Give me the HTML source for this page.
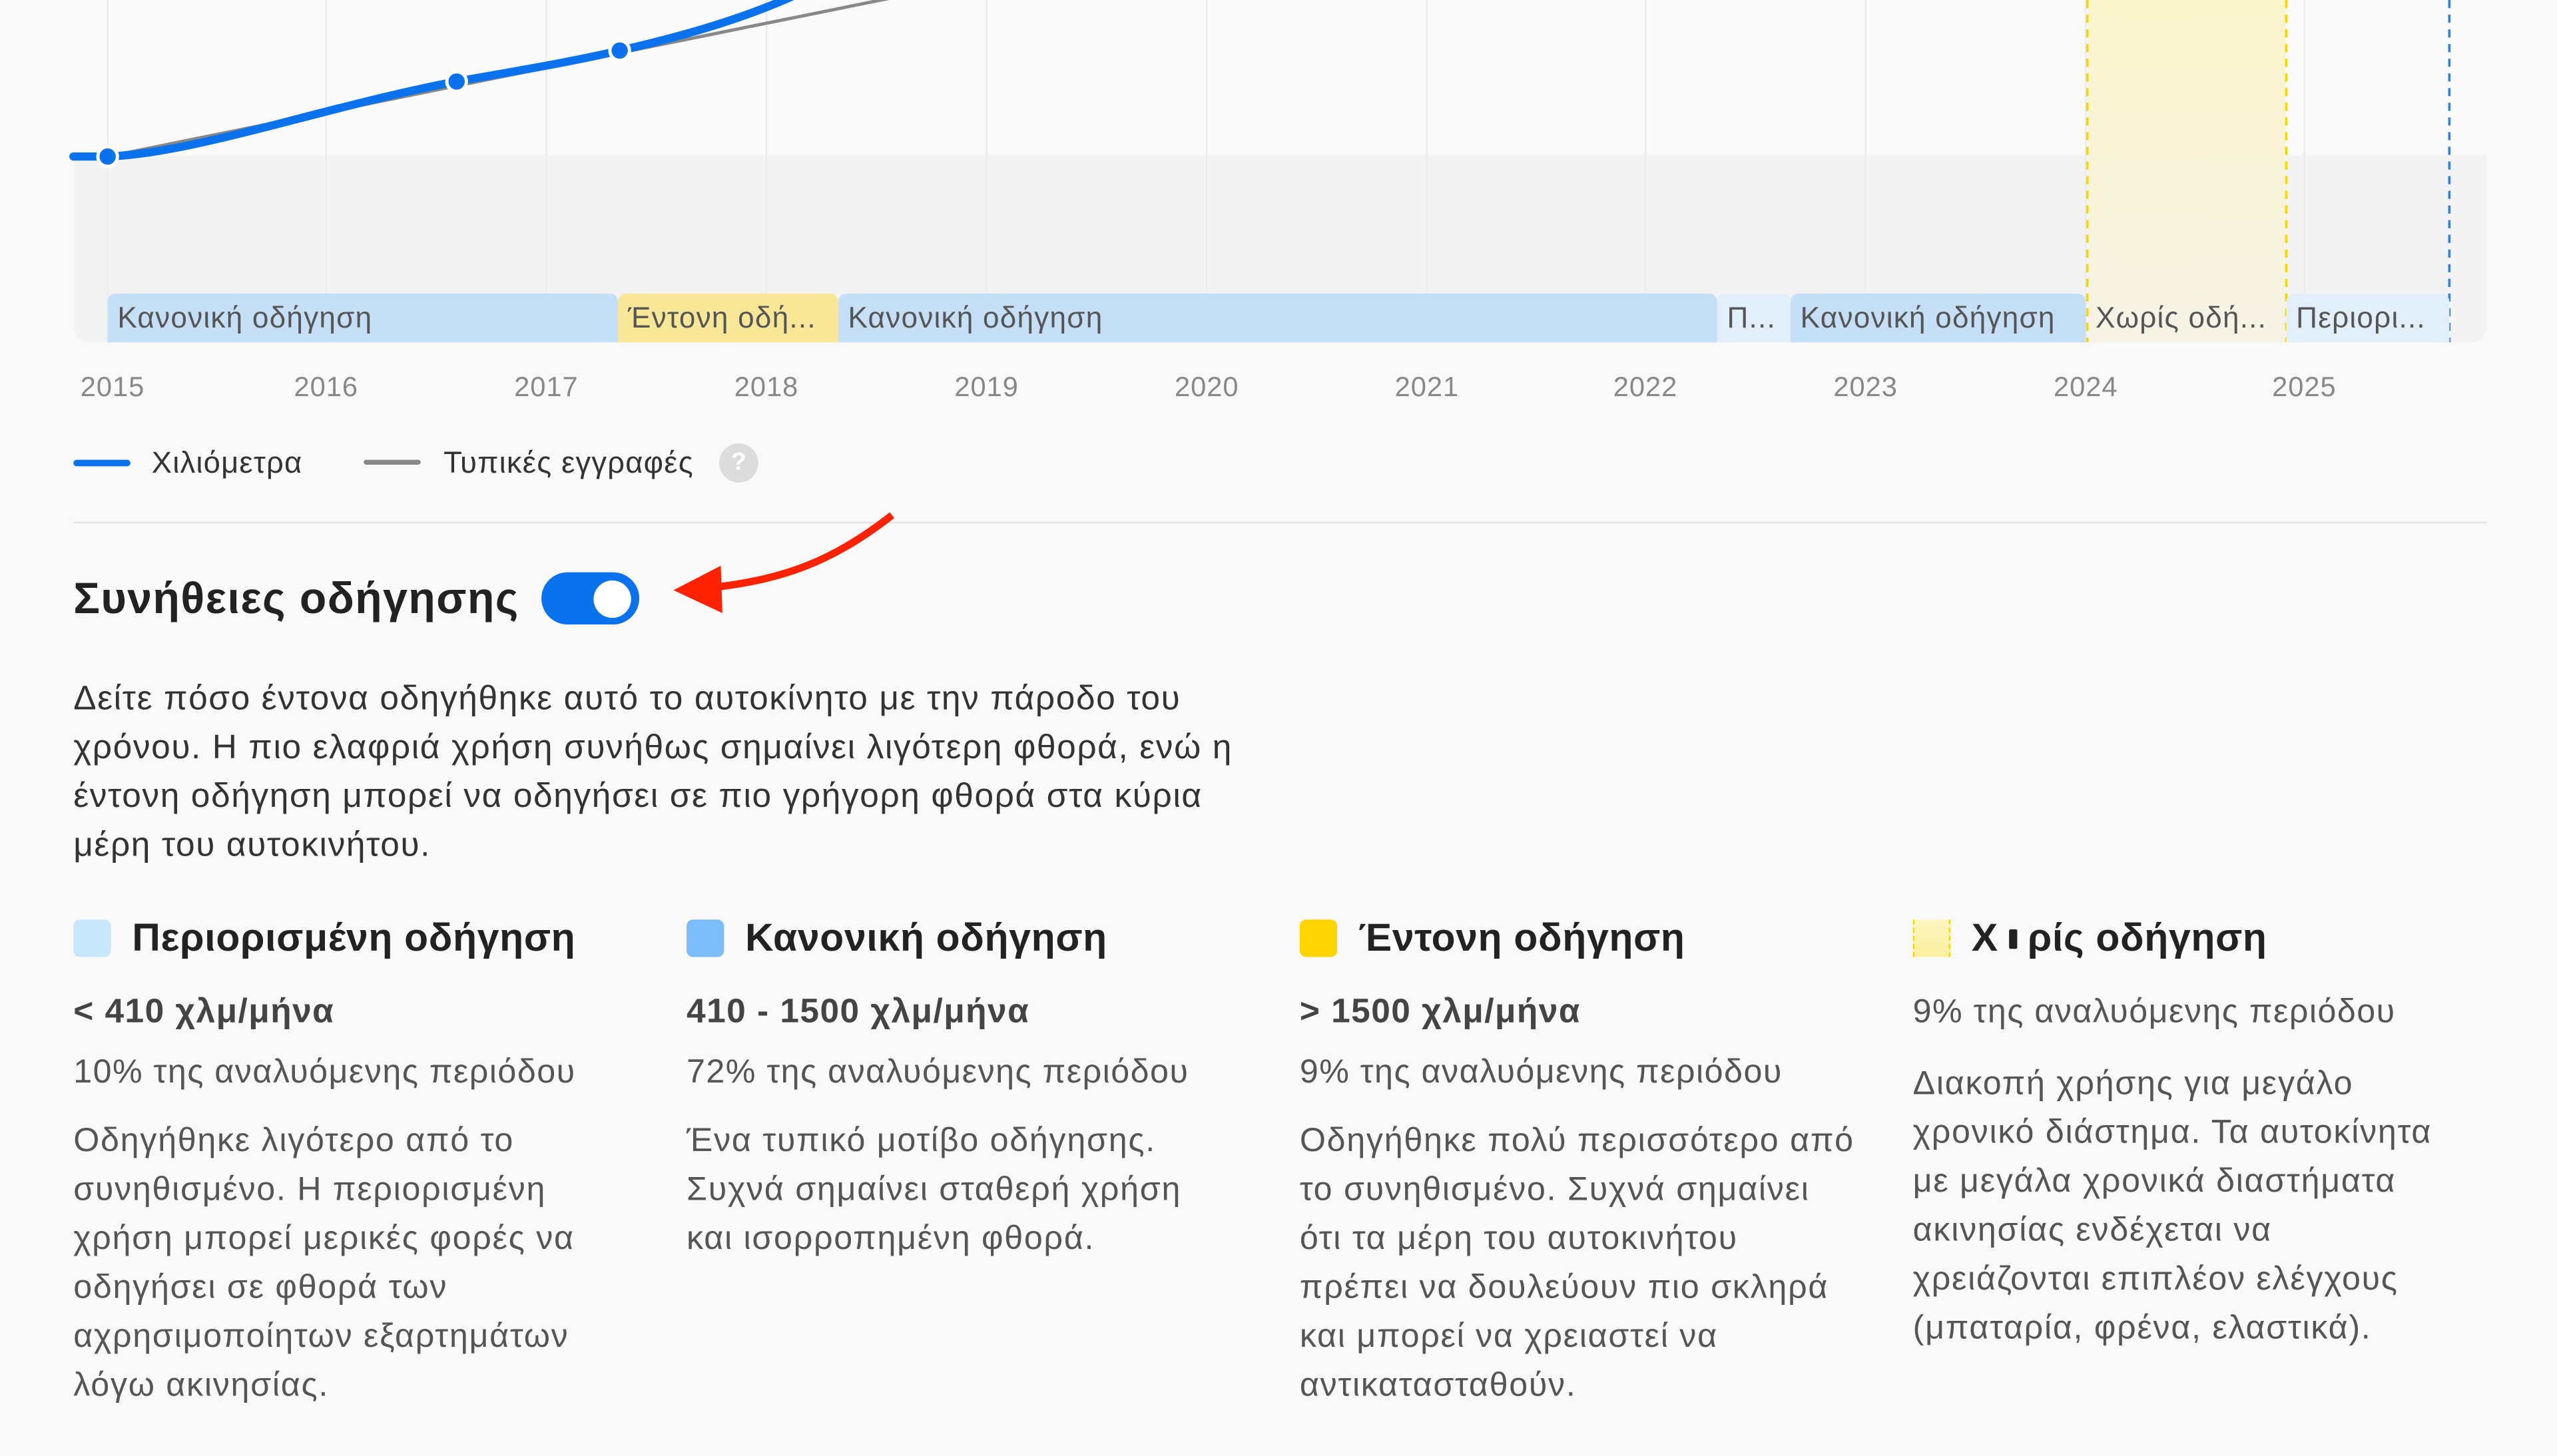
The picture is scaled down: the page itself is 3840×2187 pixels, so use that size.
<!DOCTYPE html>
<html><head><meta charset="utf-8"><style>
html,body{margin:0;padding:0;background:#f9f9f9;overflow:hidden}
body{width:3840px;height:2187px}
#w{position:absolute;left:0;top:0;width:1568px;height:893px;transform:scale(2.44898);transform-origin:0 0;font-family:"Liberation Sans",sans-serif;color:#333}
.a{position:absolute;white-space:nowrap}
.band{position:absolute;top:180px;height:30px;line-height:30px;font-size:18px;letter-spacing:.5px;color:#555;padding-left:6px;box-sizing:border-box;overflow:hidden;border-radius:5px 5px 0 0;white-space:nowrap}
.yr{position:absolute;top:228px;font-size:17px;letter-spacing:.4px;color:#888;width:60px;text-align:center}
.col{position:absolute;top:560px;width:370px}
.t{font-size:24px;letter-spacing:.3px;font-weight:bold;color:#222;height:32px;line-height:32px;position:relative;padding-left:36px;white-space:nowrap}
.sq{position:absolute;left:0;top:4px;width:23px;height:23px;border-radius:4px}
.s{font-size:21px;letter-spacing:.6px;font-weight:bold;color:#444;margin-top:15px;line-height:28px}
.g{font-size:20.5px;color:#555;margin-top:9px;line-height:28px;letter-spacing:.6px;white-space:nowrap}
.d{font-size:20.5px;color:#555;margin-top:13px;line-height:30px;letter-spacing:.7px;white-space:nowrap}
</style></head><body><div id="w">
<svg class="a" style="left:0;top:0" width="1568" height="215">
<defs><clipPath id="c"><path d="M45 0H1525V198Q1525 210 1513 210H57Q45 210 45 198Z"/></clipPath>
<linearGradient id="yg" x1="0" y1="0" x2="0" y2="1"><stop offset="0" stop-color="#fbf5cc"/><stop offset="1" stop-color="#f6f3e6"/></linearGradient></defs>
<g clip-path="url(#c)">
<rect x="45" y="0" width="1480" height="210" fill="#fafafa"/>
<rect x="45" y="95" width="1480" height="115" fill="#f3f3f3"/>
<g stroke="#e8ecf2" stroke-width="1">
<line x1="66" y1="0" x2="66" y2="210"/><line x1="200" y1="0" x2="200" y2="210"/><line x1="335" y1="0" x2="335" y2="210"/><line x1="470" y1="0" x2="470" y2="210"/><line x1="605" y1="0" x2="605" y2="210"/><line x1="740" y1="0" x2="740" y2="210"/><line x1="875" y1="0" x2="875" y2="210"/><line x1="1009" y1="0" x2="1009" y2="210"/><line x1="1144" y1="0" x2="1144" y2="210"/><line x1="1279" y1="0" x2="1279" y2="210"/><line x1="1413" y1="0" x2="1413" y2="210"/></g>
<rect x="1280" y="0" width="122" height="210" fill="url(#yg)"/>
<line x1="1280" y1="0" x2="1280" y2="210" stroke="#f5d800" stroke-width="1.5" stroke-dasharray="5 4"/>
<line x1="1402" y1="0" x2="1402" y2="210" stroke="#f5d800" stroke-width="1.5" stroke-dasharray="5 4"/>
<line x1="1502" y1="0" x2="1502" y2="210" stroke="#2b83e8" stroke-width="1.5" stroke-dasharray="5 4"/>
</g>
<path d="M66 96 L570 -6" stroke="#888" stroke-width="2" fill="none"/>
<path d="M45 96 L66 96 C120 94 200 65 280 50 C320 43 350 38 380 31 C420 22 460 10 492 -5" stroke="#0b72ee" stroke-width="5" fill="none" stroke-linecap="round"/>
<g fill="#0b72ee" stroke="#fff" stroke-width="2"><circle cx="66" cy="96" r="6"/><circle cx="280" cy="50" r="6"/><circle cx="380" cy="31" r="6"/></g>
</svg>
<div class="band" style="left:66px;width:313px;background:#c5dff7">Κανονική οδήγηση</div>
<div class="band" style="left:379px;width:135px;background:#f8e796">Έντονη οδή...</div>
<div class="band" style="left:514px;width:539px;background:#c5dff7">Κανονική οδήγηση</div>
<div class="band" style="left:1053px;width:45px;background:#e2eef9">Π...</div>
<div class="band" style="left:1098px;width:181px;background:#c5dff7">Κανονική οδήγηση</div>
<div class="band" style="left:1279px;width:123px;">Χωρίς οδή...</div>
<div class="band" style="left:1402px;width:100px;background:#e2eef9">Περιορι...</div>
<div class="yr" style="left:39px">2015</div><div class="yr" style="left:170px">2016</div><div class="yr" style="left:305px">2017</div><div class="yr" style="left:440px">2018</div><div class="yr" style="left:575px">2019</div><div class="yr" style="left:710px">2020</div><div class="yr" style="left:845px">2021</div><div class="yr" style="left:979px">2022</div><div class="yr" style="left:1114px">2023</div><div class="yr" style="left:1249px">2024</div><div class="yr" style="left:1383px">2025</div>
<div class="a" style="left:45px;top:282px;width:35px;height:4px;border-radius:2px;background:#0b72ee"></div>
<div class="a" style="left:93px;top:273px;font-size:18.5px;letter-spacing:.5px;color:#333">Χιλιόμετρα</div>
<div class="a" style="left:223px;top:282px;width:35px;height:3px;border-radius:2px;background:#888"></div>
<div class="a" style="left:272px;top:273px;font-size:18.5px;letter-spacing:.5px;color:#333">Τυπικές εγγραφές</div>
<div class="a" style="left:441px;top:272px;width:24px;height:24px;border-radius:12px;background:#dcdcdc;color:#fff;font-size:15px;line-height:24px;text-align:center;font-weight:bold">?</div>
<div class="a" style="left:45px;top:320px;width:1480px;height:1px;background:#e4e4e4"></div>
<div class="a" style="left:45px;top:352px;font-size:27px;letter-spacing:.6px;font-weight:bold;color:#222">Συνήθειες οδήγησης</div>
<div class="a" style="left:332px;top:351px;width:60px;height:32px;border-radius:16px;background:#0b72ee"></div>
<div class="a" style="left:364px;top:356px;width:23px;height:23px;border-radius:12px;background:#fff"></div>
<svg class="a" style="left:0;top:0" width="600" height="400">
<path d="M547 316 C510 345 480 355 440 360" stroke="#ff2200" stroke-width="4.5" fill="none"/>
<path d="M413 362 L442 347 L443 376 Z" fill="#ff2200"/>
</svg>
<div class="a" style="left:45px;top:414px;font-size:21px;line-height:30px;color:#333;letter-spacing:.65px">Δείτε πόσο έντονα οδηγήθηκε αυτό το αυτοκίνητο με την πάροδο του<br>χρόνου. Η πιο ελαφριά χρήση συνήθως σημαίνει λιγότερη φθορά, ενώ η<br>έντονη οδήγηση μπορεί να οδηγήσει σε πιο γρήγορη φθορά στα κύρια<br>μέρη του αυτοκινήτου.</div>
<div class="col" style="left:45px"><div class="t"><span class="sq" style="background:#c8e6fc"></span>Περιορισμένη οδήγηση</div><div class="s">&lt; 410 χλμ/μήνα</div><div class="g">10% της αναλυόμενης περιόδου</div><div class="d">Οδηγήθηκε λιγότερο από το<br>συνηθισμένο. Η περιορισμένη<br>χρήση μπορεί μερικές φορές να<br>οδηγήσει σε φθορά των<br>αχρησιμοποίητων εξαρτημάτων<br>λόγω ακινησίας.</div></div>
<div class="col" style="left:421px"><div class="t"><span class="sq" style="background:#7cbcf8"></span>Κανονική οδήγηση</div><div class="s">410 - 1500 χλμ/μήνα</div><div class="g">72% της αναλυόμενης περιόδου</div><div class="d">Ένα τυπικό μοτίβο οδήγησης.<br>Συχνά σημαίνει σταθερή χρήση<br>και ισορροπημένη φθορά.</div></div>
<div class="col" style="left:797px"><div class="t"><span class="sq" style="background:#fed500"></span>Έντονη οδήγηση</div><div class="s">&gt; 1500 χλμ/μήνα</div><div class="g">9% της αναλυόμενης περιόδου</div><div class="d">Οδηγήθηκε πολύ περισσότερο από<br>το συνηθισμένο. Συχνά σημαίνει<br>ότι τα μέρη του αυτοκινήτου<br>πρέπει να δουλεύουν πιο σκληρά<br>και μπορεί να χρειαστεί να<br>αντικατασταθούν.</div></div>
<div class="col" style="left:1173px"><div class="t"><span class="sq" style="background:linear-gradient(#fdf6c0,#fbeea0);border-left:1.5px dashed #f5d800;border-right:1.5px dashed #f5d800;border-radius:0;box-sizing:border-box"></span>Χ<span style="display:inline-block;width:5px;height:12px;background:#222;border-radius:1px;margin:0 6px 2px 7px;vertical-align:middle"></span>ρίς οδήγηση</div><div class="g" style="margin-top:15px">9% της αναλυόμενης περιόδου</div><div class="d" style="margin-top:15px">Διακοπή χρήσης για μεγάλο<br>χρονικό διάστημα. Τα αυτοκίνητα<br>με μεγάλα χρονικά διαστήματα<br>ακινησίας ενδέχεται να<br>χρειάζονται επιπλέον ελέγχους<br>(μπαταρία, φρένα, ελαστικά).</div></div>
</div></body></html>
